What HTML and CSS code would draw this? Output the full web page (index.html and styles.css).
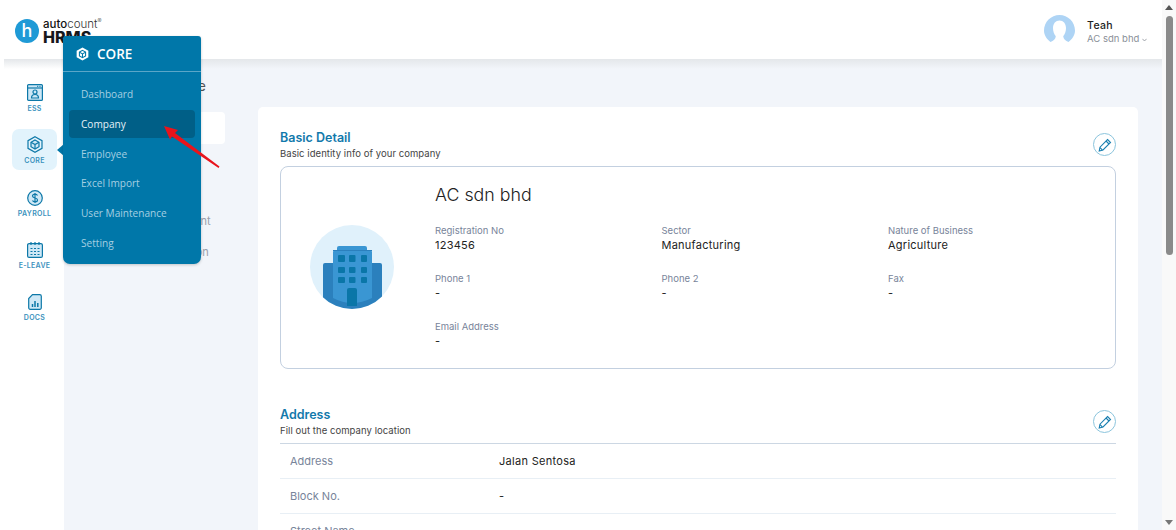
FILE: index.html
```html
<!DOCTYPE html>
<html lang="en">
<head>
  <meta charset="UTF-8" />
  <title>AutoCount HRMS - Company</title>
  <link rel="stylesheet" href="styles.css">
</head>
<body>

<div class="page">
  <div class="app">

    <header class="topbar">
      <div class="logo">
        <span class="logo-mark">h</span>
        <div class="logo-text">
          <span class="logo-auto"><b>auto</b>count<sup>®</sup></span>
          <span class="logo-hrms">HRMS</span>
        </div>
      </div>
      <div class="user">
        <svg class="user-pic" width="32" height="27" viewBox="0 0 32 27">
          <path fill="#aed4f5" d="M6.500 27C2.500 24 0 20 0 15.500 0 7 7 0 15.500 0S31 7 31 15.500c0 4.500-2.500 8.500-6.500 11.500-3-1.500-5-3-5.300-5.800C21 19.500 22 16 22 13c0-4.500-2.700-7.500-6.500-7.500S9 8.500 9 13c0 3 1 6.500 2.800 8.200-.3 2.800-2.300 4.300-5.300 5.800z"/>
        </svg>
        <div class="user-text">
          <div class="user-name">Teah</div>
          <div class="user-org">AC sdn bhd
            <svg class="chev" width="5" height="4" viewBox="0 0 5 4" fill="none" stroke="#8a8f98" stroke-width="0.800"><path d="M0.400 0.800L2.500 3 4.600 0.800"/></svg>
          </div>
        </div>
      </div>
    </header>

    <div class="shell">
      <nav class="sidebar">
        <a class="side-item">
          <svg width="16" height="17" viewBox="0 0 16 17" fill="none" stroke="#0d78a8" stroke-width="1.200">
            <rect x="0.600" y="0.600" width="14.800" height="15.800" rx="1" fill="#cfe8f6"/>
            <path d="M0.600 4h14.800"/>
            <path d="M10 2.300h4" stroke-width="1" stroke-dasharray="1 0.700"/>
            <circle cx="8" cy="8" r="2"/>
            <path d="M4.500 14c0-2.500 1.500-3.500 3.500-3.500s3.500 1 3.500 3.500z"/>
          </svg>
          <span>ESS</span>
        </a>
        <a class="side-item active">
          <svg width="16" height="17" viewBox="0 0 16 17" fill="none" stroke="#0d78a8" stroke-width="1.200">
            <path d="M8 0.700l7 4v7.600l-7 4-7-4V4.700z"/>
            <path d="M8 4l4 2.300v4.400L8 13l-4-2.300V6.300z" fill="#cfe8f6"/>
            <path d="M4 6.300l4 2.300 4-2.300M8 8.600V13"/>
          </svg>
          <span>CORE</span>
        </a>
        <a class="side-item side-payroll">
          <svg width="16" height="16" viewBox="0 0 16 16" fill="none" stroke="#0d78a8" stroke-width="1.200">
            <circle cx="8" cy="8" r="7.300" fill="#cfe8f6"/>
            <path d="M10.500 5.500C10 4.500 9 4.200 8 4.200c-1.500 0-2.500.8-2.500 1.900C5.500 8.800 10.500 7.200 10.500 9.900c0 1.100-1 1.900-2.500 1.900-1 0-2-.3-2.500-1.300M8 3v10"/>
          </svg>
          <span>PAYROLL</span>
        </a>
        <a class="side-item">
          <svg width="16" height="16" viewBox="0 0 16 16" fill="none" stroke="#0d78a8" stroke-width="1.200">
            <rect x="0.600" y="1.600" width="14.800" height="13.800" rx="1.500" fill="#cfe8f6"/>
            <path d="M4 0v3M8 0v3M12 0v3"/>
            <path d="M3.500 6.500h2M7 6.500h2M10.500 6.500h2M3.500 9.500h2M7 9.500h2M10.500 9.500h2M3.500 12.500h2M7 12.500h2M10.500 12.500h2"/>
          </svg>
          <span>E-LEAVE</span>
        </a>
        <a class="side-item">
          <svg width="14" height="16" viewBox="0 0 14 16" fill="none" stroke="#0d78a8" stroke-width="1.200">
            <path d="M4.500 0.700h7.300a1.500 1.500 0 0 1 1.500 1.500v11.600a1.500 1.500 0 0 1-1.500 1.500H2.200a1.500 1.500 0 0 1-1.500-1.500V4.500z" fill="#cfe8f6"/>
            <path d="M4.500 13V10M7 13V7M9.800 13V9" stroke-width="1.500"/>
          </svg>
          <span>DOCS</span>
        </a>
      </nav>

      <div class="subnav">
        <h2 class="subnav-title">Company Profile</h2>
        <ul class="subnav-list">
          <li class="on">Profile</li>
          <li>Branch</li>
          <li>Bank</li>
          <li>Payment Arrangement</li>
          <li>Company Registration</li>
        </ul>
      </div>

      <main class="content">
        <section class="card">
          <div class="sec-head">
            <div>
              <h3>Basic Detail</h3>
              <p>Basic identity info of your company</p>
            </div>
            <button class="edit-btn">
              <svg width="14" height="14" viewBox="0 0 14 14" fill="none" stroke="#1a7fb0" stroke-width="1.100">
                <path d="M9.500 1.500l3 3-7.500 7.500-3.800 1 .8-3.800z"/>
                <path d="M8 3l3 3M2 9.700l2.500 2.500"/>
              </svg>
            </button>
          </div>

          <div class="detail-box">
            <div class="company-pic">
              <svg width="84" height="84" viewBox="0 0 84 84">
                <defs><clipPath id="circ"><circle cx="42" cy="42" r="42"/></clipPath></defs>
                <circle cx="42" cy="42" r="42" fill="#e0f1fb"/>
                <g clip-path="url(#circ)">
                  <path fill="#2b80bd" d="M13 40a2 2 0 0 1 2-2h55a2 2 0 0 1 2 2v44H13z"/>
                  <path fill="#3a96d3" d="M25 25h35a2 2 0 0 1 2 2v46Q42 83 23 73V27a2 2 0 0 1 2-2z"/>
                  <path fill="#3a96d3" d="M27 23a2 2 0 0 1 2-2h26a2 2 0 0 1 2 2v2H27z"/>
                  <path fill="#2b80bd" d="M23 25h39v1H23z"/>
                  <g fill="#0a76a8">
                    <rect x="28" y="30" width="7" height="7" rx="1"/><rect x="39" y="30" width="6.500" height="7" rx="1"/><rect x="51" y="30" width="6" height="7" rx="1"/>
                    <rect x="28" y="42" width="7" height="6" rx="1"/><rect x="39" y="42" width="6.500" height="6" rx="1"/><rect x="51" y="42" width="6" height="6" rx="1"/>
                    <rect x="28" y="52" width="7" height="6" rx="1"/><rect x="39" y="52" width="6.500" height="6" rx="1"/><rect x="51" y="52" width="6" height="6" rx="1"/>
                    <path d="M37 65a2 2 0 0 1 2-2h6a2 2 0 0 1 2 2v16H37z"/>
                  </g>
                </g>
              </svg>
            </div>
            <div class="company-info">
              <div class="company-name">AC sdn bhd</div>
              <div class="info-grid">
                <div><label>Registration No</label><div class="val">123456</div></div>
                <div><label>Sector</label><div class="val">Manufacturing</div></div>
                <div><label>Nature of Business</label><div class="val">Agriculture</div></div>
                <div><label>Phone 1</label><div class="val">-</div></div>
                <div><label>Phone 2</label><div class="val">-</div></div>
                <div><label>Fax</label><div class="val">-</div></div>
                <div><label>Email Address</label><div class="val">-</div></div>
              </div>
            </div>
          </div>

          <div class="sec-head sec-address">
            <div>
              <h3>Address</h3>
              <p>Fill out the company location</p>
            </div>
            <button class="edit-btn">
              <svg width="14" height="14" viewBox="0 0 14 14" fill="none" stroke="#1a7fb0" stroke-width="1.100">
                <path d="M9.500 1.500l3 3-7.500 7.500-3.800 1 .8-3.800z"/>
                <path d="M8 3l3 3M2 9.700l2.500 2.500"/>
              </svg>
            </button>
          </div>

          <div class="addr-table">
            <div class="addr-row"><span class="addr-label">Address</span><span class="addr-val">Jalan Sentosa</span></div>
            <div class="addr-row"><span class="addr-label">Block No.</span><span class="addr-val">-</span></div>
            <div class="addr-row"><span class="addr-label">Street Name</span><span class="addr-val">-</span></div>
          </div>
        </section>
      </main>
    </div>

    <!-- Flyout menu over the sidebar -->
    <div class="flyout">
      <div class="flyout-head">
        <svg width="13" height="14" viewBox="0 0 16 17">
          <path fill="#fff" d="M8 0.500l7.200 4.100v7.800L8 16.500.8 12.400V4.600z"/>
          <path fill="none" stroke="#0077a9" stroke-width="1.300" d="M8 4l3.800 2.200v4.600L8 13l-3.800-2.200V6.200zM4.200 6.200L8 8.500l3.800-2.300M8 8.500V13"/>
        </svg>
        <span>CORE</span>
      </div>
      <ul class="flyout-list">
        <li>Dashboard</li>
        <li class="current">Company</li>
        <li>Employee</li>
        <li>Excel Import</li>
        <li>User Maintenance</li>
        <li>Setting</li>
      </ul>
    </div>
    <div class="flyout-caret"></div>

    <!-- Red annotation arrow -->
    <svg class="note-arrow" width="70" height="50" viewBox="0 0 70 50">
      <path fill="#e8141c" d="M3 2L17 6 14 9 58.500 42.500 57.500 44 11 12.500 9 15.500z"/>
    </svg>
  </div>

  <div class="scrollbar">
    <span class="sb-up"></span>
    <span class="sb-thumb"></span>
    <span class="sb-down"></span>
  </div>
</div>

</body>
</html>
```

FILE: styles.css
```css
* {
  box-sizing: border-box;
}
body {
  margin: 0;
  padding: 0;
  font-family: Inter, "Noto Sans", sans-serif;
  background-color: #f2f5fa;
  color: #222;
  overflow: hidden;
}
.page {
  display: flex;
  width: 1176px;
  height: 530px;
  overflow: hidden;
}
.app {
  position: relative;
  width: 1162px;
  height: 530px;
  overflow: hidden;
}

/* --- Top bar --- */
.topbar {
  position: relative;
  z-index: 2;
  display: flex;
  justify-content: space-between;
  align-items: center;
  height: 59px;
  padding: 0 15px 0 15px;
  background: #fff;
}
.topbar::after {
  content: "";
  position: absolute;
  left: 4px;
  right: 0;
  top: 100%;
  height: 10px;
  background: linear-gradient(#e4e7ea, rgba(242,245,250,0));
}
.logo {
  display: flex;
  align-items: center;
  gap: 4px;
  margin-top: 3px;
}
.logo-mark {
  display: flex;
  justify-content: center;
  align-items: center;
  width: 24px;
  height: 24px;
  padding-bottom: 2px;
  border-radius: 50%;
  background: #1f9ad6;
  color: #fff;
  font-size: 18px;
  font-weight: 500;
}
.logo-text {
  display: flex;
  flex-direction: column;
  line-height: 11px;
}
.logo-auto {
  font-size: 11.500px;
  font-weight: 300;
  color: #333;
}
.logo-auto b {
  font-weight: 500;
  color: #111;
}
.logo-auto sup {
  font-size: 6px;
  line-height: 0;
}
.logo-hrms {
  font-size: 16px;
  line-height: 14px;
  font-weight: 800;
  color: #16181c;
}
.user {
  display: flex;
  align-items: flex-start;
  gap: 11px;
  margin-top: 0;
}
.user-pic {
  display: block;
  margin-top: 0;
}
.user-text {
  padding-top: 4px;
}
.user-name {
  font-size: 10.500px;
  font-weight: 500;
  line-height: 13px;
  letter-spacing: 0.3px;
  color: #222;
}
.user-org {
  font-size: 9.500px;
  line-height: 13px;
  color: #8a8f98;
  white-space: nowrap;
}
.chev {
  vertical-align: 0;
}

/* --- Shell --- */
.shell {
  display: flex;
  height: 471px;
}
.sidebar {
  flex: 0 0 64px;
  display: flex;
  flex-direction: column;
  align-items: center;
  gap: 11px;
  padding: 18px 0 0 5px;
  background: #fff;
}
.side-item {
  display: flex;
  flex-direction: column;
  align-items: center;
  gap: 3px;
  width: 45px;
  height: 41px;
  padding-top: 7px;
  border-radius: 7px;
  color: #3b92bd;
  font-size: 7px;
  line-height: 9px;
  font-weight: 600;
  letter-spacing: 0.3px;
}
.side-item.active {
  background: #e2f3fc;
}
.side-payroll {
  margin-top: 2px;
}

/* --- Sub navigation (mostly behind the flyout) --- */
.subnav {
  flex: 0 0 194px;
  padding: 18px 33px 0 8px;
}
.subnav-title {
  margin: 0;
  height: 35px;
  padding-right: 19px;
  font-size: 14px;
  font-weight: 400;
  line-height: 18px;
  color: #555;
  text-align: right;
}
.subnav-list {
  margin: 0;
  padding: 0;
  list-style: none;
  font-size: 11px;
  color: #9aa0aa;
}
.subnav-list li {
  height: 31.500px;
  line-height: 29px;
  padding-left: 22px;
  white-space: nowrap;
}
.subnav-list li.on {
  background: #fff;
  border-radius: 4px;
}

/* --- Main card --- */
.content {
  flex: 1;
  padding: 48px 24px 0 0;
}
.card {
  height: 430px;
  padding: 22px 22px 0;
  background: #fff;
  border-radius: 5px;
}
.sec-head {
  display: flex;
  justify-content: space-between;
  align-items: flex-start;
  height: 37px;
}
.sec-head h3 {
  margin: 1px 0 0;
  font-size: 12.500px;
  line-height: 16px;
  font-weight: 600;
  color: #1279ab;
}
.sec-head p {
  margin: 1px 0 0;
  font-size: 9.500px;
  line-height: 13px;
  letter-spacing: 0.06px;
  color: #444;
}
.edit-btn {
  display: flex;
  justify-content: center;
  align-items: center;
  width: 23px;
  height: 23px;
  margin-top: 4px;
  padding: 0;
  background: #fff;
  border: 1px solid #8cc5dd;
  border-radius: 50%;
}
.sec-address {
  margin-top: 37px;
}

.detail-box {
  display: flex;
  align-items: flex-start;
  height: 203px;
  padding: 0 0 0 29px;
  border: 1px solid #c3d0e0;
  border-radius: 8px;
}
.company-pic {
  flex: 0 0 125px;
  margin-top: 58px;
}
.company-pic svg {
  display: block;
}
.company-info {
  flex: 1;
}
.company-name {
  margin-top: 17px;
  font-size: 17.800px;
  font-weight: 300;
  line-height: 22px;
  color: #222;
}
.info-grid {
  display: grid;
  grid-template-columns: repeat(3, 226.500px);
  grid-auto-rows: 48px;
  margin-top: 18px;
}
.info-grid label {
  display: block;
  font-size: 9.500px;
  line-height: 13px;
  color: #78849a;
}
.info-grid .val {
  font-size: 11px;
  line-height: 16px;
  letter-spacing: 0.25px;
  color: #222;
}

.addr-table {
  border-top: 1px solid #ccd7e3;
}
.addr-row {
  display: flex;
  align-items: center;
  height: 35px;
  padding-left: 10px;
  border-bottom: 1px solid #e8eff5;
  font-size: 11px;
}
.addr-label {
  flex: 0 0 209px;
  color: #78849a;
}
.addr-val {
  letter-spacing: 0.3px;
  color: #222;
}

/* --- Flyout --- */
.flyout {
  position: absolute;
  z-index: 5;
  left: 63px;
  top: 36px;
  width: 138px;
  height: 228px;
  background: #0077a9;
  border-radius: 3px 3px 7px 7px;
  box-shadow: 0 1px 3px rgba(0,0,0,0.2);
  font-family: "Open Sans", sans-serif;
}
.flyout-head {
  display: flex;
  align-items: center;
  gap: 8px;
  height: 36px;
  padding-left: 13px;
  border-bottom: 1px solid #5aa6c8;
  color: #fff;
  font-size: 13.500px;
  font-weight: 600;
}
.flyout-list {
  margin: 0;
  padding: 8px 6px 0;
  list-style: none;
}
.flyout-list li {
  height: 28px;
  margin-bottom: 1.800px;
  padding-left: 12px;
  border-radius: 4px;
  color: #a5cfe2;
  font-size: 10.100px;
  line-height: 28px;
}
.flyout-list li.current {
  background: #005f87;
  color: #e4f1f7;
}
.flyout-caret {
  position: absolute;
  z-index: 4;
  left: 57px;
  top: 144px;
  border-top: 6px solid transparent;
  border-bottom: 6px solid transparent;
  border-right: 7px solid #0077a9;
}
.note-arrow {
  position: absolute;
  z-index: 6;
  left: 161px;
  top: 124px;
}

/* --- Scrollbar --- */
.scrollbar {
  flex: 0 0 14px;
  display: flex;
  flex-direction: column;
  align-items: center;
  background: #f9f9f9;
  padding-top: 5px;
}
.sb-up {
  border-left: 4px solid transparent;
  border-right: 4px solid transparent;
  border-bottom: 5px solid #555;
}
.sb-thumb {
  width: 7px;
  height: 239px;
  margin-top: 6px;
  border-radius: 4px;
  background: #8a8a8a;
}
.sb-down {
  margin-top: auto;
  margin-bottom: 5px;
  border-left: 4px solid transparent;
  border-right: 4px solid transparent;
  border-top: 5px solid #777;
}
```
